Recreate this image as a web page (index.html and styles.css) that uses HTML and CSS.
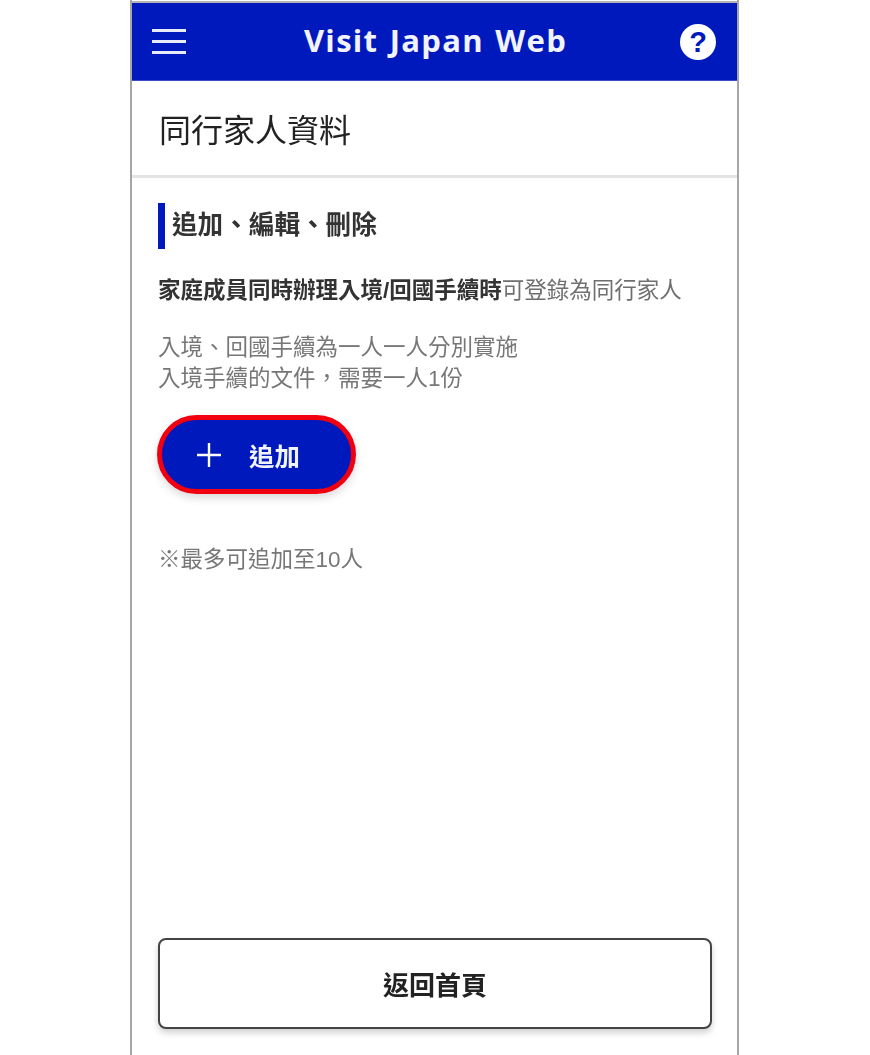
FILE: index.html
```html
<!DOCTYPE html>
<html lang="zh-TW">
<head>
    <meta charset="UTF-8">
    <meta name="viewport" content="width=device-width, initial-scale=1.0">
    <title>Visit Japan Web</title>
    <link rel="stylesheet" href="styles.css">
</head>
<body>
    <div class="phone">
        <header class="topbar">
            <div class="menu-icon">
                <span></span>
                <span></span>
                <span></span>
            </div>
            <div class="brand">Visit Japan Web</div>
            <div class="help-icon">?</div>
        </header>

        <div class="page-title">
            <h1>同行家人資料</h1>
        </div>

        <main class="content">
            <h2 class="section-title">追加、編輯、刪除</h2>
            <p class="lead"><b>家庭成員同時辦理入境/回國手續時</b>可登錄為同行家人</p>
            <p class="notes">入境、回國手續為一人一人分別實施<br>入境手續的文件，需要一人1份</p>

            <button class="add-btn" type="button">
                <svg class="plus" viewBox="0 0 24 24" width="24" height="24">
                    <path d="M12 0V24M0 12H24" stroke="#fff" stroke-width="2.4" fill="none"/>
                </svg>
                <span>追加</span>
            </button>

            <p class="limit">※最多可追加至10人</p>

            <button class="home-btn" type="button">返回首頁</button>
        </main>
    </div>
</body>
</html>
```

FILE: styles.css
```css
* {
    box-sizing: border-box;
    margin: 0;
    padding: 0;
}

body {
    font-family: "Liberation Sans", "Noto Sans CJK TC", sans-serif;
    background-color: #fff;
    color: #222;
}

.phone {
    width: 609px;
    height: 1055px;
    margin: 0 0 0 130px;
    padding-top: 3px;
    border-left: 2px solid #a6a6a6;
    border-right: 2px solid #a6a6a6;
    display: flex;
    flex-direction: column;
    overflow: hidden;
    position: relative;
    filter: blur(0.4px);
}

.phone::before {
    content: "";
    position: absolute;
    top: 1px;
    left: 0;
    right: 0;
    height: 2px;
    background-color: #b5b5b5;
}

.topbar {
    height: 78px;
    flex-shrink: 0;
    background-color: #0019bd;
    border-bottom: 1px solid #3a4ccc;
    display: flex;
    align-items: center;
    justify-content: space-between;
    padding: 0 21px 0 20px;
    position: relative;
}

.menu-icon {
    width: 34px;
    display: flex;
    flex-direction: column;
    gap: 8px;
}

.menu-icon span {
    display: block;
    height: 3px;
    background-color: #e8ebfa;
}

.brand {
    position: absolute;
    left: 0;
    right: 0;
    top: 17px;
    text-align: center;
    font-family: "Open Sans", sans-serif;
    font-size: 31px;
    font-weight: 700;
    line-height: 40px;
    letter-spacing: 1.3px;
    word-spacing: 2px;
    color: #f1f3fd;
    padding-left: 2px;
}

.help-icon {
    width: 36px;
    height: 36px;
    border-radius: 50%;
    background-color: #fff;
    color: #0019bd;
    font-size: 29px;
    font-weight: 700;
    line-height: 36px;
    text-align: center;
}

.page-title {
    height: 97px;
    flex-shrink: 0;
    padding: 30px 27px 0;
    border-bottom: 3px solid #e4e4e4;
}

.page-title h1 {
    font-size: 32px;
    font-weight: 400;
    line-height: 40px;
    color: #222;
}

.content {
    flex: 1;
    padding: 25px 26px 0;
    display: flex;
    flex-direction: column;
    align-items: flex-start;
}

.section-title {
    height: 46px;
    border-left: 7px solid #0019bd;
    padding-left: 7px;
    font-size: 25.6px;
    font-weight: 700;
    line-height: 44px;
    color: #333;
}

.lead {
    margin-top: 26px;
    font-size: 22.5px;
    line-height: 32px;
    color: #6f6f6f;
}

.lead b {
    font-weight: 700;
    color: #333;
}

.notes {
    margin-top: 25px;
    font-size: 22.5px;
    line-height: 31px;
    color: #777;
}

.add-btn {
    margin-top: 21px;
    margin-left: -1px;
    width: 199px;
    height: 79px;
    border: 5px solid #f00010;
    border-radius: 40px;
    background-color: #0019bd;
    color: #f1f3fd;
    font-family: inherit;
    font-size: 25.5px;
    font-weight: 700;
    display: flex;
    align-items: center;
    padding-left: 35px;
    gap: 28px;
    box-shadow: 0 4px 8px rgba(0, 0, 0, 0.15);
}

.limit {
    margin-top: 50px;
    font-size: 22.5px;
    line-height: 32px;
    color: #777;
}

.home-btn {
    margin-top: auto;
    margin-bottom: 26px;
    width: 554px;
    height: 91px;
    border: 2px solid #444;
    border-radius: 8px;
    background-color: #fff;
    color: #222;
    font-family: inherit;
    font-size: 26px;
    font-weight: 700;
    box-shadow: 0 4px 6px rgba(0, 0, 0, 0.18);
}
```
